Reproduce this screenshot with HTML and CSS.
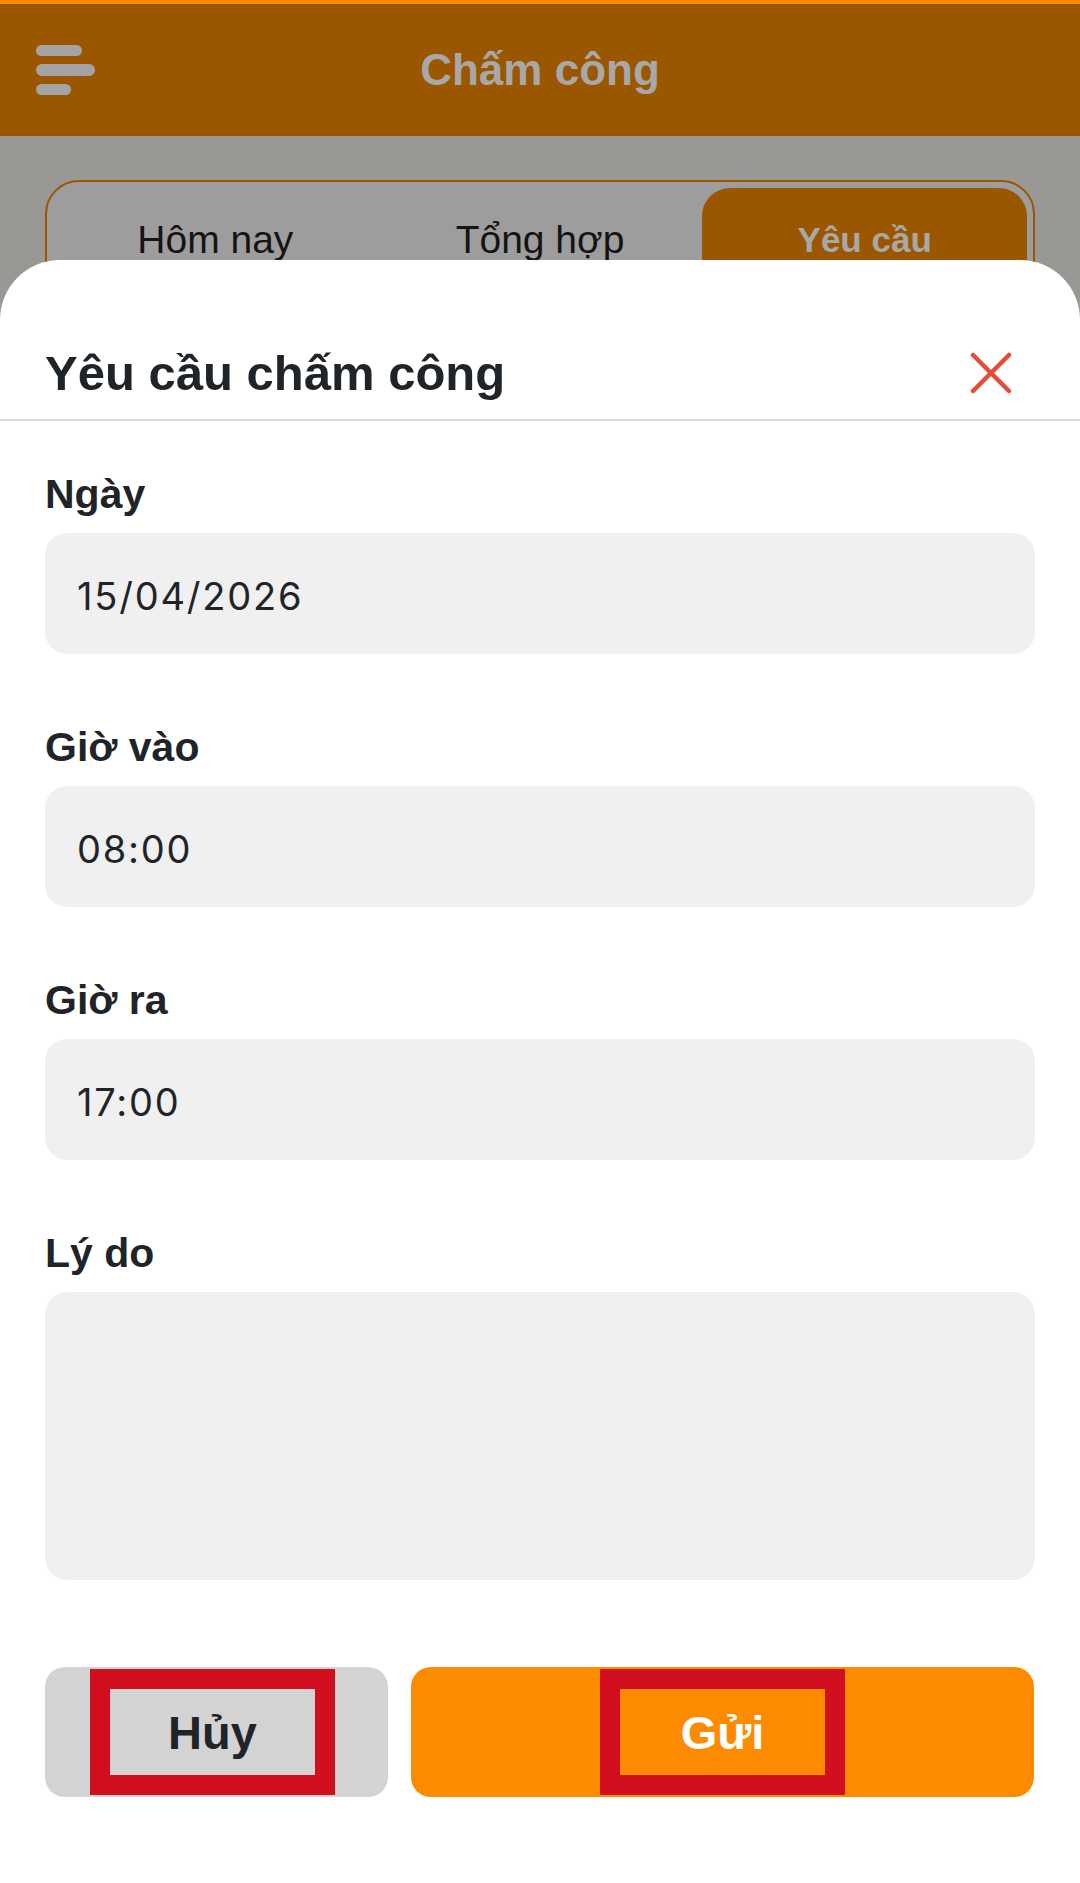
FILE: index.html
```html
<!DOCTYPE html>
<html lang="vi">
  <head>
    <meta charset="UTF-8" />
    <meta name="viewport" content="width=device-width, initial-scale=1.0" />
    <title>Chấm công</title>
    <link rel="stylesheet" href="styles.css">
  </head>
  <body>
    <div class="status-strip"></div>
    <header class="topbar">
      <div class="menu-icon"><span></span><span></span><span></span></div>
      <h1>Chấm công</h1>
      <div></div>
    </header>
    <nav class="tabs">
      <div class="tab">Hôm nay</div>
      <div class="tab">Tổng hợp</div>
      <div class="tab active">Yêu cầu</div>
    </nav>

    <div class="sheet">
      <div class="sheet-head">
        <h2>Yêu cầu chấm công</h2>
        <svg class="close" width="42" height="42" viewBox="0 0 42 42">
          <path d="M3 3 L39 39 M39 3 L3 39" stroke="#e34b3d" stroke-width="4.5" stroke-linecap="round" fill="none" />
        </svg>
      </div>
      <form class="form">
        <div class="field">
          <label>Ngày</label>
          <div class="input">15/04/2026</div>
        </div>
        <div class="field">
          <label>Giờ vào</label>
          <div class="input">08:00</div>
        </div>
        <div class="field">
          <label>Giờ ra</label>
          <div class="input">17:00</div>
        </div>
        <div class="field">
          <label>Lý do</label>
          <div class="input area"></div>
        </div>
      </form>
      <div class="actions">
        <div class="btn btn-cancel"><span class="mark mark-cancel">Hủy</span></div>
        <div class="btn btn-send"><span class="mark">Gửi</span></div>
      </div>
    </div>
  </body>
</html>
```

FILE: styles.css
```css
* {
  box-sizing: border-box;
}
body {
  margin: 0;
  width: 1080px;
  height: 1883px;
  overflow: hidden;
  position: relative;
  background: #999894;
  font-family: "Liberation Sans", Arial, sans-serif;
}
.status-strip {
  height: 4px;
  background: #ff8c00;
}
.topbar {
  height: 132px;
  background: #9b5600;
  display: grid;
  grid-template-columns: 1fr auto 1fr;
  align-items: center;
  padding: 0 36px;
}
.menu-icon {
  display: flex;
  flex-direction: column;
  gap: 8px;
}
.menu-icon span {
  display: block;
  height: 11px;
  border-radius: 6px;
  background: #a4a4a4;
}
.menu-icon span:nth-child(1) { width: 46px; }
.menu-icon span:nth-child(2) { width: 59px; height: 12px; }
.menu-icon span:nth-child(3) { width: 35px; }
.topbar h1 {
  margin: 0;
  font-size: 44px;
  font-weight: 700;
  color: #a8a8a8;
}
.tabs {
  margin: 44px 45px 0;
  border: 2px solid #9b5600;
  border-radius: 34px;
  padding: 6px;
  display: grid;
  grid-template-columns: repeat(3, 1fr);
  background: #9d9d9d;
}
.tab {
  height: 104px;
  display: flex;
  align-items: center;
  justify-content: center;
  font-size: 39px;
  color: #141414;
  border-radius: 28px;
}
.tab.active {
  background: #9b5600;
  color: #a8a8a8;
  font-weight: 700;
  font-size: 35px;
}
/* bottom sheet over the dimmed page */
.sheet {
  position: absolute;
  top: 260px;
  left: 0;
  right: 0;
  bottom: 0;
  background: #fff;
  border-radius: 60px 60px 0 0;
}
.sheet-head {
  display: flex;
  justify-content: space-between;
  align-items: center;
  padding: 84px 68px 17px 45px;
  border-bottom: 2px solid #dadada;
}
.sheet-head h2 {
  margin: 0;
  font-size: 49px;
  line-height: 58px;
  font-weight: 700;
  color: #1f2429;
}
.form {
  margin: 0;
  padding: 50px 45px 0;
  display: flex;
  flex-direction: column;
  gap: 70px;
}
.field label {
  display: block;
  font-size: 41px;
  line-height: 46px;
  font-weight: 700;
  color: #1f2429;
  margin-bottom: 16px;
}
.input {
  height: 121px;
  background: #f0f0f0;
  border-radius: 22px;
  padding: 4px 32px 0;
  display: flex;
  align-items: center;
  font-family: Inter, "DejaVu Sans", sans-serif;
  font-size: 38px;
  letter-spacing: 1.8px;
  color: #1f2429;
}
.input.area {
  height: 288px;
}
.actions {
  display: flex;
  gap: 23px;
  padding: 0 46px 0 45px;
  margin-top: 87px;
}
.btn {
  height: 130px;
  border-radius: 20px;
  display: flex;
  align-items: center;
  justify-content: center;
}
.btn-cancel {
  width: 343px;
  background: #d3d3d3;
  color: #1f2429;
}
.btn-send {
  flex: 1;
  background: #fd8b00;
  color: #fff;
}
.mark {
  width: 245px;
  height: 126px;
  border: 20px solid #d10f1f;
  display: flex;
  align-items: center;
  justify-content: center;
  font-size: 47px;
  font-weight: 700;
}
.mark-cancel {
  margin-right: 8px;
}
```
